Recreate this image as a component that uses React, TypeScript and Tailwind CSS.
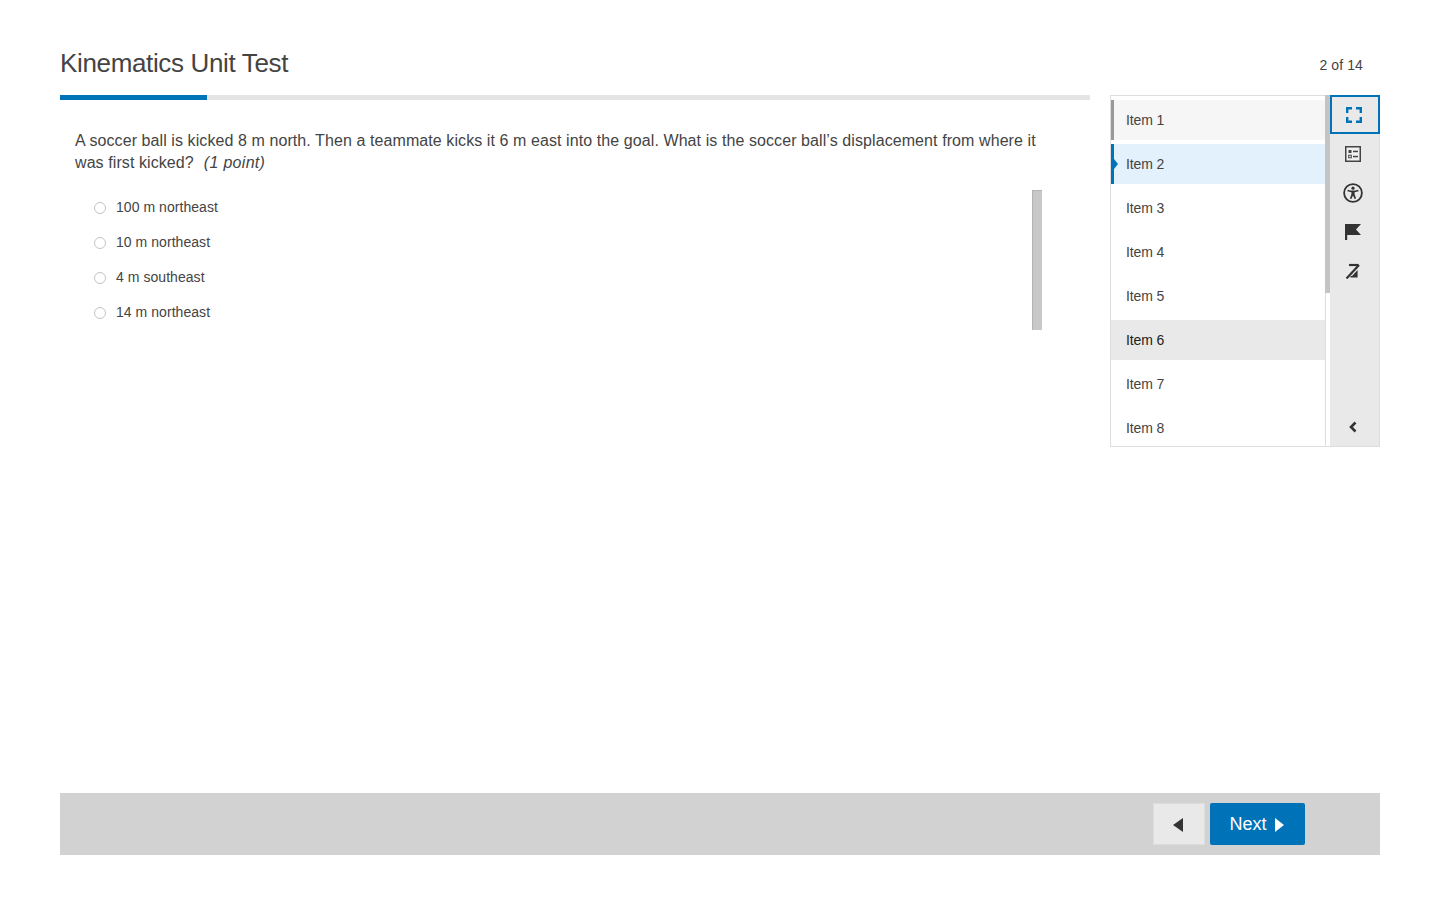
const items = ['Item 1', 'Item 2', 'Item 3', 'Item 4', 'Item 5', 'Item 6', 'Item 7', 'Item 8'];
const options = ['100 m northeast', '10 m northeast', '4 m southeast', '14 m northeast'];

function ItemRow({ label, index }: { label: string; index: number }) {
  if (index === 0) {
    return (
      <div className="h-10 shrink-0 flex items-center pl-[12px] bg-[#f6f6f6] border-l-[3px] border-[#999999] text-[#444444]">
        {label}
      </div>
    );
  }
  if (index === 1) {
    return (
      <div className="relative h-10 shrink-0 flex items-center pl-[12px] bg-[#e3f1fc] border-l-[3px] border-[#0073b8] text-[#444444]">
        <span className="absolute left-0 top-[15px] w-0 h-0 border-y-[5px] border-y-transparent border-l-[4px] border-l-[#0073b8]" />
        {label}
      </div>
    );
  }
  if (index === 5) {
    return <div className="h-10 shrink-0 flex items-center pl-[15px] bg-[#e9e9e9] text-[#222222]">{label}</div>;
  }
  return <div className="h-10 shrink-0 flex items-center pl-[15px] text-[#444444]">{label}</div>;
}

export default function App() {
  return (
    <div className="h-[900px] flex flex-col px-[60px] bg-white text-[#444444] font-['Liberation_Sans',Arial,sans-serif]">
      {/* Header */}
      <div className="h-[95px] shrink-0 flex items-start justify-between">
        <h1 className="mt-[47px] text-[26px] leading-[32px] tracking-[-0.35px] font-normal text-[#444444]">Kinematics Unit Test</h1>
        <span className="mt-[57px] mr-[17px] text-sm leading-4 tracking-[0.1px] text-[#444444]">2 of 14</span>
      </div>

      <div className="flex-1 flex items-start gap-5">
        {/* Question */}
        <div className="w-[1030px] shrink-0">
          <div className="h-[5px] bg-[#e4e4e4]">
            <div className="h-full w-[147px] bg-[#0073b8]" />
          </div>
          <div className="relative pl-[15px] pr-[50px] pt-[30px]">
            <div className="text-base leading-[22px] tracking-[0.085px] text-[#444444]">
              <p>A soccer ball is kicked 8 m north. Then a teammate kicks it 6 m east into the goal. What is the soccer ball’s displacement from where it</p>
              <p className="flex">
                <span>was first kicked?</span>
                <span className="ml-[10px] italic tracking-[0.3px]">(1 point)</span>
              </p>
            </div>
            <div className="mt-[15px] flex flex-col">
              {options.map((option) => (
                <label key={option} className="h-[35px] flex items-center pl-[19px] gap-[10px] text-sm tracking-[0.05px] text-[#444444]">
                  <span className="w-3 h-3 mt-[2px] rounded-full border border-[#c4c4c4] bg-white" />
                  {option}
                </label>
              ))}
            </div>
            <div className="absolute top-[90px] right-[48px] w-[10px] h-[140px] bg-[#c8c8c8] border-l border-t border-[#b4b4b4]" />
          </div>
        </div>

        {/* Side panel */}
        <div className="w-[270px] h-[352px] shrink-0 flex">
          <div className="w-[215px] h-full shrink-0 overflow-hidden border border-r-0 border-[#dddddd] pt-[4px] flex flex-col gap-1 text-sm tracking-[-0.1px]">
            {items.map((item, i) => (
              <ItemRow key={item} label={item} index={i} />
            ))}
          </div>
          <div className="w-[5px] h-full shrink-0 bg-white border-l border-b border-[#dddddd] flex flex-col">
            <div className="h-[198px] -ml-px bg-[#c4c4c4]" />
          </div>
          <div className="w-[50px] h-full shrink-0 bg-[#e9e9e9] border-b border-r border-[#dddddd] flex flex-col items-center">
            <div className="-mr-px w-[50px] h-[39px] shrink-0 border-2 border-[#0073b8] pr-[3px] flex items-center justify-center">
              <svg width="16" height="16" viewBox="0 0 16 16" fill="none" stroke="#0073b8" strokeWidth="2.4">
                <path d="M1.2 6V1.2H6M10 1.2H14.8V6M14.8 10V14.8H10M6 14.8H1.2V10" />
              </svg>
            </div>
            <div className="h-[39px] w-full shrink-0 pr-[3px] flex items-center justify-center">
              <svg width="16" height="16" viewBox="0 0 16 16" fill="none">
                <rect x="0.75" y="0.75" width="14.5" height="14.5" fill="#f0f0f0" stroke="#444444" strokeWidth="1.5" />
                <rect x="3.5" y="4" width="3" height="3" fill="#444444" />
                <rect x="8" y="4.7" width="5" height="1.5" fill="#444444" />
                <rect x="3.7" y="9.2" width="2.6" height="2.6" stroke="#444444" strokeWidth="1" />
                <rect x="8" y="9.8" width="5" height="1.5" fill="#444444" />
              </svg>
            </div>
            <div className="h-[39px] w-full shrink-0 pr-[3px] flex items-center justify-center">
              <svg width="20" height="20" viewBox="0 0 20 20" fill="none">
                <circle cx="10" cy="10" r="8.9" stroke="#333333" strokeWidth="1.8" />
                <circle cx="10" cy="5.2" r="1.6" fill="#333333" />
                <path d="M4.6 7.5C6.5 8.1 8 8.4 10 8.4C12 8.4 13.5 8.1 15.4 7.5" stroke="#333333" strokeWidth="1.7" />
                <path d="M8.4 8.3H11.6V11.2L13.1 15.6L11.6 16.1L10 12.4L8.4 16.1L6.9 15.6L8.4 11.2Z" fill="#333333" />
              </svg>
            </div>
            <div className="h-[39px] w-full shrink-0 pr-[3px] flex items-center justify-center">
              <svg width="16" height="16" viewBox="0 0 16 16">
                <path d="M0 0H16L11 5.5L16 11H2.2V16H0Z" fill="#333333" />
              </svg>
            </div>
            <div className="h-[39px] w-full shrink-0 pr-[3px] flex items-center justify-center">
              <svg width="16" height="16" viewBox="0 0 16 16" fill="none">
                <path d="M4 2H13.5" stroke="#333333" strokeWidth="2.2" />
                <path d="M1.5 15.5L14 2" stroke="#333333" strokeWidth="2.2" />
                <path d="M8 12L12.6 7V14.6H5.5V13H7Z" fill="#333333" />
              </svg>
            </div>
            <div className="mt-auto mb-[-1px] h-[40px] w-full shrink-0 pr-[3px] flex items-center justify-center">
              <svg width="8" height="12" viewBox="0 0 8 12" fill="none">
                <path d="M6.5 1.5L2 6L6.5 10.5" stroke="#333333" strokeWidth="2.6" />
              </svg>
            </div>
          </div>
        </div>
      </div>

      {/* Footer */}
      <div className="h-[62px] mb-[45px] shrink-0 bg-[#d2d2d2] flex items-center justify-end pr-[75px] gap-[5px]">
        <button className="w-[52px] h-[42px] pr-[2px] pt-[1px] bg-[#e9e9e9] border border-[#dddddd] flex items-center justify-center">
          <span className="w-0 h-0 border-y-[7px] border-y-transparent border-r-[10px] border-r-[#333333]" />
        </button>
        <button className="w-[95px] h-[42px] pr-[2px] rounded-[2px] bg-[#0073b8] text-white text-lg flex items-center justify-center gap-2">
          Next
          <span className="w-0 h-0 mt-[2px] border-y-[7px] border-y-transparent border-l-[9px] border-l-white" />
        </button>
      </div>
    </div>
  );
}
